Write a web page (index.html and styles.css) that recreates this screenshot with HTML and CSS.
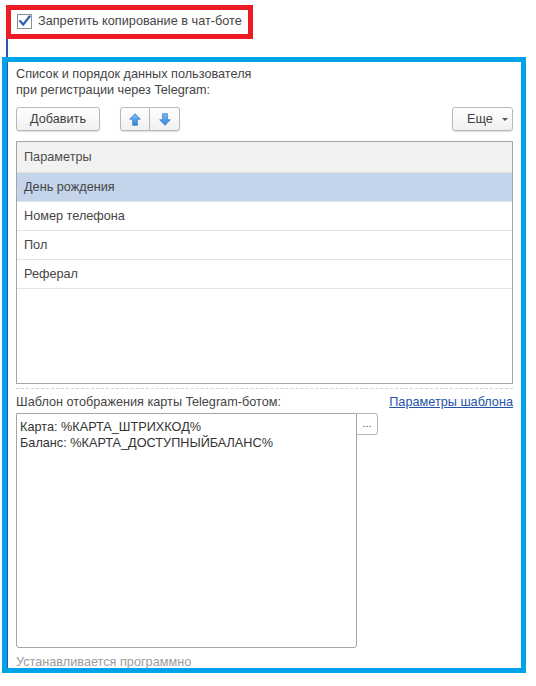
FILE: index.html
```html
<!DOCTYPE html>
<html lang="ru">
<head>
<meta charset="utf-8">
<title>Настройки чат-бота</title>
<link rel="stylesheet" href="styles.css">
</head>
<body>
<div class="form">
  <label class="check-row">
    <span class="check">
      <svg width="15" height="15" viewBox="0 0 15 15"><path d="M3.2 7.2 L6.2 10.6 L12.4 2.6" fill="none" stroke="#2b5cb4" stroke-width="2.2" stroke-linecap="square"/></svg>
    </span>
    <span>Запретить копирование в чат-боте</span>
  </label>

  <div class="section">
    <p class="caption">Список и порядок данных пользователя<br>при регистрации через Telegram:</p>

    <div class="toolbar">
      <button class="btn add">Добавить</button>
      <div class="btn-group">
        <button class="btn icon" aria-label="Вверх">
          <svg width="12" height="13" viewBox="0 0 12 13"><defs><linearGradient id="gu" x1="0" y1="0" x2="0" y2="1"><stop offset="0" stop-color="#7cc0f4"/><stop offset="1" stop-color="#2f86d6"/></linearGradient></defs><path d="M6 0.7 L11.3 6.2 L8.3 6.2 L8.3 12.3 L3.7 12.3 L3.7 6.2 L0.7 6.2 Z" fill="url(#gu)" stroke="#3b84c9" stroke-width="0.9" stroke-linejoin="round"/></svg>
        </button>
        <button class="btn icon" aria-label="Вниз">
          <svg width="12" height="13" viewBox="0 0 12 13"><defs><linearGradient id="gd" x1="0" y1="0" x2="0" y2="1"><stop offset="0" stop-color="#7cc0f4"/><stop offset="1" stop-color="#2f86d6"/></linearGradient></defs><path d="M3.7 0.7 L8.3 0.7 L8.3 6.8 L11.3 6.8 L6 12.3 L0.7 6.8 L3.7 6.8 Z" fill="url(#gd)" stroke="#3b84c9" stroke-width="0.9" stroke-linejoin="round"/></svg>
        </button>
      </div>
      <button class="btn more">Еще <span class="caret"></span></button>
    </div>

    <div class="table">
      <div class="thead">Параметры</div>
      <div class="row selected">День рождения</div>
      <div class="row">Номер телефона</div>
      <div class="row">Пол</div>
      <div class="row">Реферал</div>
    </div>

    <div class="divider"></div>

    <div class="template-head">
      <span>Шаблон отображения карты Telegram-ботом:</span>
      <a class="link" href="#">Параметры шаблона</a>
    </div>

    <div class="template">
      <div class="textarea">Карта: %КАРТА_ШТРИХКОД%<br>Баланс: %КАРТА_ДОСТУПНЫЙБАЛАНС%</div>
      <button class="btn dots">...</button>
    </div>

    <div class="hint">Устанавливается программно</div>
  </div>
</div>

<div class="mark mark-red"></div>
<div class="mark mark-blue"></div>
</body>
</html>
```

FILE: styles.css
```css
html, body {
  margin: 0;
  padding: 0;
  background: #ffffff;
}

body {
  font-family: "Liberation Sans", Arial, sans-serif;
  font-size: 12.7px;
  color: #454545;
  width: 536px;
  height: 686px;
  overflow: hidden;
  position: relative;
}

.form {
  margin: 13px 0 0 6px;
  border-left: 2px solid #2c57a6;
  padding-left: 8px;
}

.check-row {
  display: flex;
  align-items: center;
  gap: 6px;
  height: 16px;
  line-height: 16px;
  margin-left: 1px;
}

.check {
  width: 15px;
  height: 15px;
  box-sizing: border-box;
  border: 1px solid #8e8e8e;
  background: #fff;
  display: block;
  position: relative;
}

.check svg {
  position: absolute;
  left: -1px;
  top: -1px;
}

.section {
  margin-top: 37px;
  width: 497px;
}

.caption {
  margin: 0;
  line-height: 16px;
}

.toolbar {
  display: flex;
  align-items: center;
  margin-top: 9px;
}

.btn {
  font-family: inherit;
  font-size: 12.7px;
  color: #404040;
  height: 24px;
  box-sizing: border-box;
  border: 1px solid #b8b8b8;
  border-radius: 3px;
  background: linear-gradient(#ffffff, #f0f0f0);
  box-shadow: 0 1px 1px rgba(0, 0, 0, 0.12);
  padding: 0;
  margin: 0;
  display: flex;
  align-items: center;
  justify-content: center;
}

.add {
  width: 84px;
}

.btn-group {
  display: flex;
  margin-left: 20px;
}

.btn.icon {
  width: 30px;
}

.btn-group .btn.icon:first-child {
  border-radius: 3px 0 0 3px;
}

.btn-group .btn.icon:last-child {
  border-radius: 0 3px 3px 0;
  border-left: none;
}

.more {
  margin-left: auto;
  width: 61px;
  justify-content: flex-start;
  padding-left: 14px;
  gap: 0;
}

.caret {
  width: 0;
  height: 0;
  border-left: 3px solid transparent;
  border-right: 3px solid transparent;
  border-top: 3px solid #555;
  margin-left: 9px;
  margin-top: 1px;
}

.table {
  margin-top: 10px;
  height: 243px;
  box-sizing: border-box;
  border: 1px solid #a5a5a5;
  background: #fff;
}

.thead {
  height: 30px;
  line-height: 30px;
  background: #f2f2f2;
  border-bottom: 1px solid #e0e0e0;
  padding-left: 7px;
  color: #4d4d4d;
}

.row {
  height: 28px;
  line-height: 28px;
  border-bottom: 1px solid #e4e4e4;
  padding-left: 7px;
}

.row.selected {
  background: #c4d4ea;
}

.divider {
  margin-top: 4px;
  border-top: 1px dashed #d2d2d2;
}

.template-head {
  margin-top: 5px;
  display: flex;
  justify-content: space-between;
  line-height: 16px;
}

.link {
  color: #2553a8;
  text-decoration: underline;
}

.template {
  display: flex;
  align-items: flex-start;
  margin-top: 3px;
}

.textarea {
  width: 341px;
  height: 235px;
  box-sizing: border-box;
  border: 1px solid #a5a5a5;
  border-radius: 0 0 3px 3px;
  padding: 5px 0 0 3px;
  line-height: 16px;
  color: #333;
}

.btn.dots {
  width: 21px;
  height: 22px;
  border-left: none;
  border-radius: 0 3px 3px 0;
  background: #fff;
  box-shadow: none;
  color: #555;
  font-size: 11px;
  letter-spacing: 0;
  padding-bottom: 2px;
}

.hint {
  margin-top: 6px;
  line-height: 16px;
  color: #9b9b9b;
}

.mark {
  position: absolute;
  box-sizing: border-box;
  pointer-events: none;
}

.mark-red {
  left: 6px;
  top: 5px;
  width: 247px;
  height: 34px;
  border: 5px solid #ed1c24;
}

.mark-blue {
  left: 2px;
  top: 57px;
  width: 524px;
  height: 616px;
  border: 5px solid #00a2e8;
}
```
